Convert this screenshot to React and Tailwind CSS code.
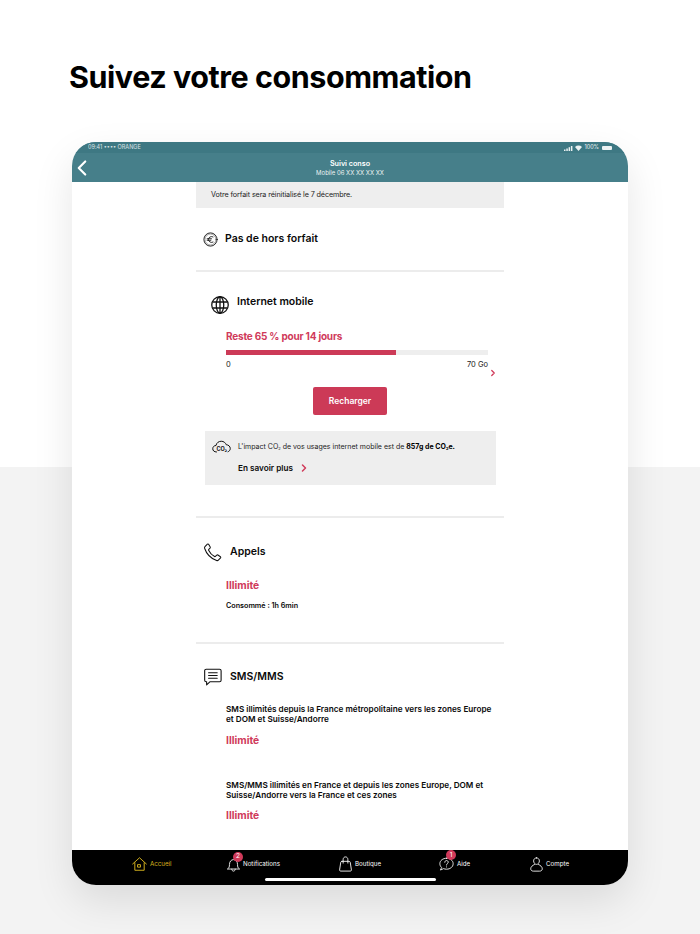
import React from 'react';
import { ChevronLeft, ChevronRight } from 'lucide-react';

const RED = 'text-[#d03a5a]';

function EuroIcon() {
  return (
    <svg width="15" height="15" viewBox="0 0 24 24" fill="none" stroke="#111" strokeWidth="1.4" strokeLinecap="round">
      <circle cx="12" cy="12" r="10.6" />
      <circle cx="12" cy="12" r="8.8" strokeWidth="0.6" />
      <path d="M16 7.8a5 5 0 0 0-7.4 4.2 5 5 0 0 0 7.4 4.2M6.6 10.8h7M6.6 13.2h6" />
    </svg>
  );
}

function GlobeIcon() {
  return (
    <svg width="18" height="18" viewBox="0 0 24 24" fill="none" stroke="#111" strokeWidth="1.7">
      <circle cx="12" cy="12" r="11" />
      <ellipse cx="12" cy="12" rx="5" ry="11" />
      <path d="M12 1v22M2.500 8h19M2.500 16h19" />
    </svg>
  );
}

function PhoneIcon() {
  return (
    <svg width="19" height="19" viewBox="0 0 24 24" fill="none" stroke="#111" strokeWidth="1.3" strokeLinejoin="round">
      <path d="M2.500 4.500 5.500 1.500c.6-.5 1.200-.3 1.600.2l2 3.400c.3.6.2 1-.2 1.400L7.300 8c-.3.3-.4.7-.2 1.100 1.600 3.400 4.200 6.200 7.500 8 .4.2.8.1 1.100-.2l1.600-1.500c.4-.4 1-.5 1.500-.2l3.200 2.100c.5.400.6 1 .2 1.500l-2.800 2.900c-.6.600-1.400.7-2.200.4C10 19.500 4.400 13.800 2 6.600c-.2-.8 0-1.500.5-2.100Z" />
    </svg>
  );
}

function SmsIcon() {
  return (
    <svg width="19" height="18" viewBox="0 0 24 23" fill="none" stroke="#111" strokeWidth="1.4" strokeLinecap="round" strokeLinejoin="round">
      <path d="M4 1.500h17c1.200 0 2 .8 2 2v12c0 1.200-.8 2-2 2H9l-4.500 4v-4H4c-1.200 0-2-.8-2-2v-12c0-1.200.8-2 2-2Z" />
      <path d="M7 6h11M7 9.500h11M7 13h11" />
    </svg>
  );
}

function CloudCo2Icon() {
  return (
    <svg width="19" height="14" viewBox="0 0 38 28" fill="none" stroke="#111" strokeWidth="2" strokeLinecap="round">
      <path d="M9 24C4 24 1.500 21 1.500 17.500S4 11 8 11c1-5.500 5.500-8.500 10.500-8.500 5 0 8.500 3 10 7 4.500 0 8 3.500 8 7.500 0 3.500-2 5.500-4.500 6.500" />
      <text x="9" y="22" fontSize="11" fontWeight="700" fill="#111" stroke="none" fontFamily="Inter, sans-serif">CO₂</text>
    </svg>
  );
}

function HomeIcon() {
  return (
    <svg width="15" height="14" viewBox="0 0 24 22" fill="none" stroke="#d9b51f" strokeWidth="1.500" strokeLinejoin="round" strokeLinecap="round">
      <path d="M1 11 12 1l11 10M4.500 9v12h15V9" />
      <rect x="9.500" y="12" width="4" height="4" />
    </svg>
  );
}

function BellIcon() {
  return (
    <svg width="13" height="15" viewBox="0 0 22 26" fill="none" stroke="#fff" strokeWidth="1.500" strokeLinecap="round" strokeLinejoin="round">
      <path d="M1 20.500c2.500-1.500 3-3.500 3-7.500 0-5 3-8.500 7-8.500s7 3.500 7 8.500c0 4 .5 6 3 7.500ZM8 21c0 2 1.300 3.500 3 3.500s3-1.500 3-3.500" />
    </svg>
  );
}

function BagIcon() {
  return (
    <svg width="13" height="16" viewBox="0 0 22 27" fill="none" stroke="#fff" strokeWidth="1.500" strokeLinecap="round" strokeLinejoin="round">
      <path d="M5 9h12c1 0 1.700.6 2 1.500l2 13c.1 1-.6 2-1.700 2H2.700c-1.100 0-1.800-1-1.700-2l2-13C3.300 9.600 4 9 5 9Z" />
      <path d="M7 12V6c0-2.800 1.800-4.500 4-4.500s4 1.700 4 4.500v6" />
    </svg>
  );
}

function HelpIcon() {
  return (
    <svg width="15" height="14" viewBox="0 0 26 24" fill="none" stroke="#fff" strokeWidth="1.500" strokeLinecap="round" strokeLinejoin="round">
      <path d="M13 2c6.500 0 11.500 4 11.500 9.500S19.500 21 13 21c-2 0-3.500-.3-5-1l-5.500 2.500 2-4.500C2.500 16.200 1.500 14 1.500 11.500 1.500 6 6.500 2 13 2Z" />
      <path d="M10 9c0-1.800 1.300-3 3-3s3 1.200 3 2.800c0 2.400-3 2.400-3 5M13 17v.2" />
    </svg>
  );
}

function UserIcon() {
  return (
    <svg width="13" height="15" viewBox="0 0 22 26" fill="none" stroke="#fff" strokeWidth="1.500" strokeLinecap="round" strokeLinejoin="round">
      <path d="M11 1.500c2.900 0 5 2.300 5 5.300s-2.100 6-5 6-5-3-5-6 2.100-5.300 5-5.300Z" />
      <path d="M7.500 13C4 14.500 1 17 1 20.500c0 2.500 2 4 4.500 4h11c2.500 0 4.500-1.500 4.500-4 0-3.500-3-6-6.500-7.500" />
    </svg>
  );
}

function Divider() {
  return <div className="h-[2px] bg-[#ececec]" />;
}

function TabItem({ icon, label, badge, badgeClass, className, textClass = 'text-white' }) {
  return (
    <div className={`flex items-center gap-[3px] ${className}`}>
      <div className="relative flex">
        {icon}
        {badge && (
          <span className={`absolute flex h-[10px] w-[10px] items-center justify-center rounded-full bg-[#d03a5a] text-[6.500px] leading-none text-white ${badgeClass}`}>
            {badge}
          </span>
        )}
      </div>
      <span className={`text-[6.200px] leading-none ${textClass}`}>{label}</span>
    </div>
  );
}

export default function App() {
  return (
    <div
      className="h-[934px] w-[700px] overflow-hidden bg-[linear-gradient(#fff_467px,#f3f3f3_467px)] pt-[61px] text-[#0a0a0a]"
      style={{ fontFamily: 'Inter, "Noto Sans", sans-serif' }}
    >
      <h1 className="ml-[69px] text-[30.500px] font-bold leading-[32px] tracking-[-0.45px] text-black">
        Suivez votre consommation
      </h1>

      <div className="relative mx-[72px] mt-[49px] flex h-[743px] flex-col overflow-hidden rounded-[24px] bg-white shadow-[0_16px_40px_rgba(0,0,0,0.1)]">
        {/* header */}
        <div className="flex h-[40px] shrink-0 flex-col bg-[#467f8a] text-white">
          <div className="flex h-[11px] items-center justify-between bg-[#3e7883] pl-[16px] pr-[16px] pt-[1px] text-[5.500px] leading-none">
            <span className="opacity-80">09:41 •••• ORANGE</span>
            <div className="flex items-center gap-[2px] opacity-90">
              <svg width="9" height="5" viewBox="0 0 9 5" fill="#fff">
                <rect x="0" y="3.500" width="1.500" height="1.500" />
                <rect x="2.300" y="2.500" width="1.500" height="2.500" />
                <rect x="4.600" y="1.200" width="1.500" height="3.800" />
                <rect x="6.900" y="0" width="1.500" height="5" />
              </svg>
              <svg width="7" height="6" viewBox="0 0 7 6" fill="#fff">
                <path d="M0 2a5 5 0 0 1 7 0L3.500 6Z" />
              </svg>
              <span>100%</span>
              <span className="ml-[1px] h-[4px] w-[10px] rounded-[1px] bg-white" />
            </div>
          </div>
          <div className="relative flex flex-1 flex-col items-center justify-center">
            <ChevronLeft size={26} strokeWidth={2} className="absolute -left-[3px] top-[2px]" />
            <span className="text-[7.200px] font-semibold leading-[10px]">Suivi conso</span>
            <span className="text-[6px] leading-[8px] opacity-90">Mobile 06 XX XX XX XX</span>
          </div>
        </div>

        {/* content */}
        <div className="mx-auto w-[308px] flex-1 overflow-hidden">
          <div className="flex h-[26px] items-center bg-[#eeeeee] pl-[15px] text-[7.200px] leading-none tracking-[-0.1px] text-[#222]">
            Votre forfait sera réinitialisé le 7 décembre.
          </div>

          <div className="flex h-[62px] items-center gap-[7px] pl-[7px]">
            <EuroIcon />
            <span className="mt-[1px] text-[10.500px] font-semibold leading-none">Pas de hors forfait</span>
          </div>
          <Divider />

          <div className="h-[244px] pt-[24px]">
            <div className="flex items-start gap-[8px] pl-[15px]">
              <GlobeIcon />
              <span className="text-[10.500px] font-semibold leading-[12px]">Internet mobile</span>
            </div>
            <p className={`ml-[30px] mt-[15px] text-[10px] font-bold leading-[14px] tracking-[-0.2px] ${RED}`}>
              Reste 65 % pour 14 jours
            </p>
            <div className="ml-[30px] mt-[7px] h-[5px] w-[262px] bg-[#eeeeee]">
              <div className="h-full w-[65%] bg-[#cc3a57]" />
            </div>
            <div className="ml-[30px] mt-[5px] flex w-[262px] justify-between text-[7.500px] leading-[10px] text-[#222]">
              <span>0</span>
              <span>70 Go</span>
            </div>
            <div className="ml-[292px] flex h-[6px] items-center">
              <ChevronRight size={10} strokeWidth={3} className={RED} />
            </div>
            <div className="mt-[11px] flex justify-center">
              <div className="flex h-[28px] w-[74px] items-center justify-center rounded-[2px] bg-[#cc3a57] text-[8.500px] font-semibold leading-none text-white">
                Recharger
              </div>
            </div>
            <div className="ml-[9px] mt-[16px] h-[54px] w-[291px] bg-[#eeeeee] pl-[7px] pt-[9px]">
              <div className="flex items-center gap-[7px]">
                <CloudCo2Icon />
                <span className="text-[7px] leading-[12px] text-[#222]">
                  L'impact CO<sub className="text-[4px]">2</sub> de vos usages internet mobile est de{' '}
                  <b className="font-bold text-black">857g de CO<sub className="text-[4px]">2</sub>e.</b>
                </span>
              </div>
              <div className="ml-[26px] mt-[8px] flex items-center gap-[5px]">
                <span className="text-[8.200px] font-semibold leading-[12px]">En savoir plus</span>
                <ChevronRight size={12} strokeWidth={3} className={RED} />
              </div>
            </div>
          </div>
          <Divider />

          <div className="h-[124px] pt-[25px]">
            <div className="flex items-center gap-[8px] pl-[7px]">
              <PhoneIcon />
              <span className="text-[10.500px] font-semibold leading-none">Appels</span>
            </div>
            <p className={`ml-[30px] mt-[16px] text-[10.300px] font-bold leading-[14px] ${RED}`}>Illimité</p>
            <p className="ml-[30px] mt-[9px] text-[7.200px] font-semibold leading-[10px]">Consommé : 1h 6min</p>
          </div>
          <Divider />

          <div className="pt-[24px]">
            <div className="flex items-center gap-[8px] pl-[7px]">
              <SmsIcon />
              <span className="text-[10.500px] font-semibold leading-none">SMS/MMS</span>
            </div>
            <p className="ml-[30px] mt-[18px] w-[270px] text-[8.200px] font-semibold leading-[10px]">
              SMS illimités depuis la France métropolitaine vers les zones Europe et DOM et Suisse/Andorre
            </p>
            <p className={`ml-[30px] mt-[9px] text-[10.300px] font-bold leading-[14px] ${RED}`}>Illimité</p>
            <p className="ml-[30px] mt-[33px] w-[270px] text-[8.200px] font-semibold leading-[10px]">
              SMS/MMS illimités en France et depuis les zones Europe, DOM et Suisse/Andorre vers la France et ces zones
            </p>
            <p className={`ml-[30px] mt-[8px] text-[10.300px] font-bold leading-[14px] ${RED}`}>Illimité</p>
          </div>
        </div>

        {/* tab bar */}
        <div className="flex h-[35px] shrink-0 items-center bg-black pb-[7px] pl-[60px]">
          <TabItem icon={<HomeIcon />} label="Accueil" className="w-[95px]" textClass="text-[#d9b51f]" />
          <TabItem icon={<BellIcon />} label="Notifications" badge="2" badgeClass="-right-[3px] -top-[5px]" className="w-[112px]" />
          <TabItem icon={<BagIcon />} label="Boutique" className="w-[100px]" />
          <TabItem icon={<HelpIcon />} label="Aide" badge="1" badgeClass="-right-[2px] -top-[7px]" className="w-[91px]" />
          <TabItem icon={<UserIcon />} label="Compte" />
        </div>
        <div className="absolute bottom-[4px] left-[193px] h-[3px] w-[171px] rounded-full bg-white" />
      </div>
    </div>
  );
}
